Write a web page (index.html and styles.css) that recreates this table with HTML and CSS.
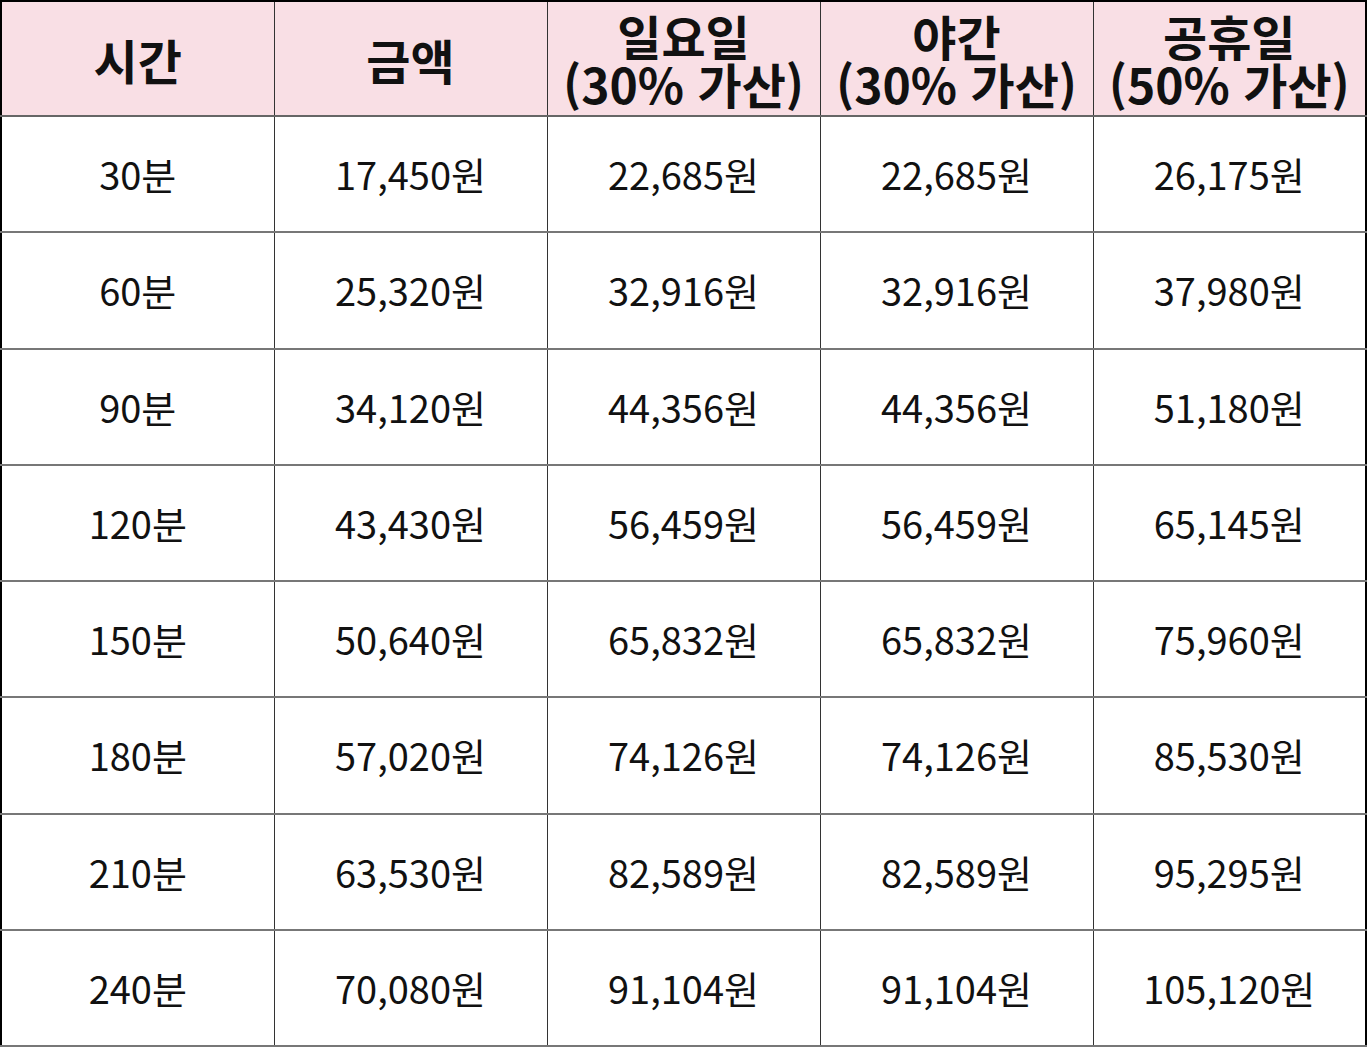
FILE: index.html
```html
<!DOCTYPE html>
<html lang="ko">
<head>
<meta charset="utf-8">
<link rel="stylesheet" href="styles.css">
</head>
<body>
<table class="price">
  <thead>
    <tr>
      <th>시간</th>
      <th>금액</th>
      <th>일요일<br>(30% 가산)</th>
      <th>야간<br>(30% 가산)</th>
      <th>공휴일<br>(50% 가산)</th>
    </tr>
  </thead>
  <tbody>
    <tr><td>30분</td><td>17,450원</td><td>22,685원</td><td>22,685원</td><td>26,175원</td></tr>
    <tr><td>60분</td><td>25,320원</td><td>32,916원</td><td>32,916원</td><td>37,980원</td></tr>
    <tr><td>90분</td><td>34,120원</td><td>44,356원</td><td>44,356원</td><td>51,180원</td></tr>
    <tr><td>120분</td><td>43,430원</td><td>56,459원</td><td>56,459원</td><td>65,145원</td></tr>
    <tr><td>150분</td><td>50,640원</td><td>65,832원</td><td>65,832원</td><td>75,960원</td></tr>
    <tr><td>180분</td><td>57,020원</td><td>74,126원</td><td>74,126원</td><td>85,530원</td></tr>
    <tr><td>210분</td><td>63,530원</td><td>82,589원</td><td>82,589원</td><td>95,295원</td></tr>
    <tr><td>240분</td><td>70,080원</td><td>91,104원</td><td>91,104원</td><td>105,120원</td></tr>
  </tbody>
</table>
</body>
</html>
```

FILE: styles.css
```css
html, body {
  margin: 0;
  padding: 0;
  background: #ffffff;
}
.price {
  width: 1367px;
  height: 1047px;
  border-collapse: collapse;
  table-layout: fixed;
  font-family: "Noto Sans CJK KR", "Noto Sans", sans-serif;
  color: #111;
  border: 2px solid #000;
}
.price th, .price td {
  border: 1px solid #333;
  text-align: center;
  vertical-align: middle;
  padding: 0;
}
.price th {
  height: 113px;
  background: #f9dfe5;
  font-size: 48px;
  font-weight: 700;
  line-height: 48px;
  border-bottom: 2px solid #666;
}
.price td {
  height: 114px;
  font-size: 38px;
  font-weight: 400;
  line-height: 40px;
}
.price tbody tr td {
  border-bottom: 2px solid #777;
}
```
